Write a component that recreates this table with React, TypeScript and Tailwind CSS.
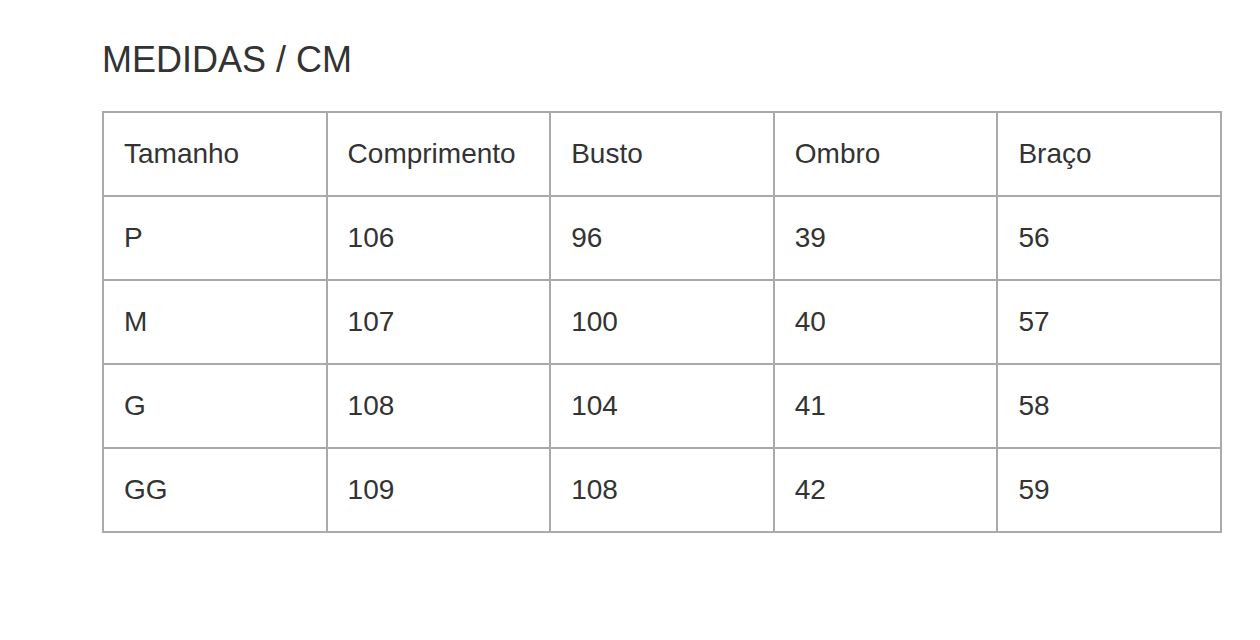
const headers = ["Tamanho", "Comprimento", "Busto", "Ombro", "Braço"];

const rows = [
  ["P", "106", "96", "39", "56"],
  ["M", "107", "100", "40", "57"],
  ["G", "108", "104", "41", "58"],
  ["GG", "109", "108", "42", "59"],
];

export default function App() {
  return (
    <div className="min-h-[640px] bg-white pl-[102px] pt-[40px] text-[#333] font-['Liberation_Sans',Arial,sans-serif]">
      <h1 className="text-[36px] leading-[40px] font-normal">MEDIDAS / CM</h1>

      <table className="mt-[31px] w-[1120px] table-fixed border-separate border-spacing-0 border-l-2 border-t-2 border-[#aaa]">
        <tbody>
          <tr>
            {headers.map((h) => (
              <td
                key={h}
                className="h-[84px] border-r-2 border-b-2 border-[#aaa] pl-[20px] align-middle text-[28px] leading-[32px]"
              >
                {h}
              </td>
            ))}
          </tr>
          {rows.map((row) => (
            <tr key={row[0]}>
              {row.map((cell, i) => (
                <td
                  key={i}
                  className="h-[84px] border-r-2 border-b-2 border-[#aaa] pl-[20px] align-middle text-[28px] leading-[32px]"
                >
                  {cell}
                </td>
              ))}
            </tr>
          ))}
        </tbody>
      </table>
    </div>
  );
}
